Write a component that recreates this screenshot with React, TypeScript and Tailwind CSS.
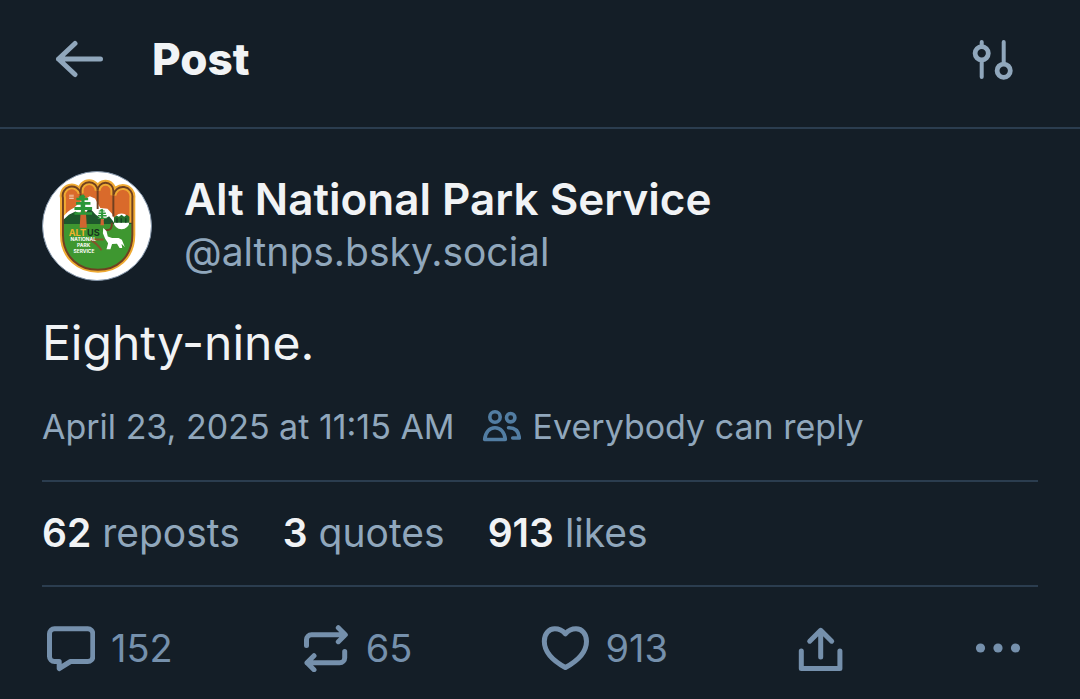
import type { ReactNode } from "react";

const stats = [
  { count: "62", label: "reposts" },
  { count: "3", label: "quotes" },
  { count: "913", label: "likes" },
];

function Icon({ children, size = 48, width = 5 }: { children: ReactNode; size?: number; width?: number }) {
  return (
    <svg
      width={size}
      height={size}
      viewBox={`0 0 ${size} ${size}`}
      fill="none"
      stroke="currentColor"
      strokeWidth={width}
      strokeLinecap="round"
      strokeLinejoin="round"
      aria-hidden="true"
      className="shrink-0"
    >
      {children}
    </svg>
  );
}

const actions = [
  {
    name: "Reply",
    count: "152",
    icon: (
      <Icon>
        <path d="M7.5 4.8h33.3a5 5 0 0 1 5 5v22.7a5 5 0 0 1-5 5H23.5l-11.3 7v-7H7.5a5 5 0 0 1-5-5V9.8a5 5 0 0 1 5-5z" />
      </Icon>
    ),
  },
  {
    name: "Repost",
    count: "65",
    icon: (
      <Icon>
        <path d="M4.5 21.5v-5.8a5 5 0 0 1 5-5H43M36.3 3.7l7 7-7 7M42.7 27.5v6.2a5 5 0 0 1-5 5H5M12 31.7l-7 7 7 7" />
      </Icon>
    ),
  },
  {
    name: "Like",
    count: "913",
    icon: (
      <Icon>
        <path d="M24.4 9.8C21.5 6.5 17.5 4.8 13.8 4.8C7.6 4.8 3.3 10 3.3 17.2C3.3 28 12.5 37 24.4 43.5C36.3 37 45.5 28 45.5 17.2C45.5 10 41.2 4.8 35 4.8C31.3 4.8 27.3 6.5 24.4 9.8z" />
      </Icon>
    ),
  },
  {
    name: "Share",
    icon: (
      <Icon>
        <path d="M4.3 27v17.6h38.6V27M23.7 33V6.5M12.7 17.2l11-10.9 11 10.9" />
      </Icon>
    ),
  },
  {
    name: "More options",
    icon: (
      <Icon>
        <g fill="currentColor" stroke="none">
          <circle cx="6.5" cy="24" r="4.6" />
          <circle cx="24" cy="24" r="4.6" />
          <circle cx="41.5" cy="24" r="4.6" />
        </g>
      </Icon>
    ),
  },
];

function Tree({ x, y, scale }: { x: number; y: number; scale: number }) {
  return (
    <g transform={`translate(${x} ${y}) scale(${scale})`}>
      <path d="M-8 52h16l3 50h-22z" fill="#cf6530" />
      <path
        d="M0 0l7 8-4 3h12v7H4v6h18v8H6v7h21v9H5v7h22v8h-54v-8h20v-7h-20v-9h19v-7h-14v-8h16v-6h-15v-7h10l-4-3z"
        fill="#2c9738"
      />
    </g>
  );
}

function Logo() {
  const hand =
    "M98 112A27 27 0 0 1 152 98V90A26 26 0 0 1 204 90A24 24 0 0 1 252 90V104A29 29 0 0 1 310 112V225C310 295 260 332 205 332C150 332 98 295 98 225z";
  return (
    <svg viewBox="37 33 330 330" role="img" aria-label="Alt National Park Service" className="size-full">
      <defs>
        <clipPath id="hand">
          <path d={hand} />
        </clipPath>
      </defs>
      <path d={hand} fill="#d96a2b" stroke="#efaa32" strokeWidth="18" />
      <g clipPath="url(#hand)">
        <path d="M94 176c12-18 24-27 38-34l20-19 28-16 16 7 16 29 22 2 16 18 9 25v15H94z" fill="#fff" />
        <path d="M94 184l22-20 20-10 25 12 18-24 18 20 22 18 20-12 16 20h60v14H94z" fill="#1d572c" />
        <path d="M94 192h220v146H94z" fill="#3e9730" />
      </g>
      <g fill="none" stroke="#704020" strokeWidth="6">
        <path d={hand} />
        <path d="M152 98v14M204 90v56M252 104v65M247 188c2 18-5 24-20 23" />
        <path d="M180 239h42M185 243c13 5 20 13 31 29" stroke="#85552b" />
      </g>
      <circle cx="277" cy="184" r="24" fill="#fff" />
      <path d="M254 172l7-6 8 4 8-6 8 6 8-6 8 6v18h-47z" fill="#246f2b" />
      <path d="M263 174v14M276 174v14M290 174v14" stroke="#143e21" strokeWidth="4" />
      <Tree x={160} y={101} scale={1} />
      <Tree x={218} y={145} scale={0.5} />
      <path d="M117 104h14M117 109h14M117 114h14" stroke="#f1c4a4" strokeWidth="3" />
      <path
        d="M221 204l10 9 4 17 13 5h20l10 5 9 22-10-10 2 13h-8l-8-13-15 1-5 16h-12l5-18-9-14-7-17z"
        fill="#fff"
      />
      <g textAnchor="middle" fontFamily="Inter, sans-serif" fontWeight="700">
        <text x="142" y="228" fontSize="28" fill="#f0b32c">ALT</text>
        <text x="191" y="228" fontSize="28" fill="#17341f">US</text>
        <g fontSize="15" fill="#fff">
          <text x="160" y="245">NATIONAL</text>
          <text x="161" y="263">PARK</text>
          <text x="162" y="281">SERVICE</text>
        </g>
      </g>
    </svg>
  );
}

export default function App() {
  return (
    <div className="min-h-screen bg-[#141e27] font-['Inter',sans-serif] text-[#f1f3f5]">
      <header className="flex h-[129px] items-center border-b-2 border-[#2b3d4f] pr-16 pb-[10px] pl-[55px]">
        <button aria-label="Back" className="text-[#90a7bc]">
          <Icon>
            <path d="M45.5 24H3.5M20 8.5L3.5 24L20 39.5" />
          </Icon>
        </button>
        <h1 className="ml-[49px] text-[44px] leading-[56px] font-extrabold">Post</h1>
        <button aria-label="Thread options" className="ml-auto text-[#90a7bc]">
          <Icon width={4}>
            <path d="M13.7 7v4.500M13.7 25v17M35.7 7v21" />
            <circle cx="13.7" cy="18.3" r="6.6" strokeWidth="4.8" />
            <circle cx="35.7" cy="35.7" r="6.6" strokeWidth="4.8" />
          </Icon>
        </button>
      </header>

      <main className="px-[42px] pt-[42px]">
        <div className="flex items-center gap-8">
          <a href="#profile" className="size-[110px] overflow-hidden rounded-full border border-[#8294a8] bg-white">
            <Logo />
          </a>
          <div>
            <h2 className="text-[44px] leading-[52px] font-semibold">Alt National Park Service</h2>
            <a href="#profile" className="block text-[39px] leading-[54px] text-[#90a7bc]">@altnps.bsky.social</a>
          </div>
        </div>

        <p className="mt-[31px] text-[48px] leading-[62px]">Eighty-nine.</p>

        <div className="mt-[30px] flex h-11 items-center text-[34px] text-[#90a7bc]">
          <time dateTime="2025-04-23T11:15">April 23, 2025 at 11:15 AM</time>
          <button className="ml-[26px] flex items-center gap-3">
            <span className="text-[#527da2]">
              <Icon size={40} width={3.6}>
                <circle cx="14" cy="11" r="5.2" />
                <circle cx="29.7" cy="11.7" r="4.2" />
                <path d="M14 21.7C8.5 21.7 4.3 26.2 3.7 33.5H24.3C23.7 26.2 19.5 21.7 14 21.7zM27.5 21.7C34 21.5 37.8 25 38.3 32H31.7" />
              </Icon>
            </span>
            Everybody can reply
          </button>
        </div>

        <div className="mt-8 flex h-[107px] items-center gap-[43px] border-y-2 border-[#2b3d4f] text-[39px] text-[#90a7bc]">
          {stats.map((stat) => (
            <a key={stat.label} href={`#${stat.label}`}>
              <strong className="font-semibold text-[#f1f3f5]">{stat.count}</strong> {stat.label}
            </a>
          ))}
        </div>

        <div className="mt-[37px] flex justify-between pr-4 pl-[5px] text-[38px] leading-[48px] text-[#7590ac]">
          {actions.map((action) => (
            <button key={action.name} aria-label={action.name} className="flex items-center gap-4">
              {action.icon}
              {action.count}
            </button>
          ))}
        </div>
      </main>
    </div>
  );
}
